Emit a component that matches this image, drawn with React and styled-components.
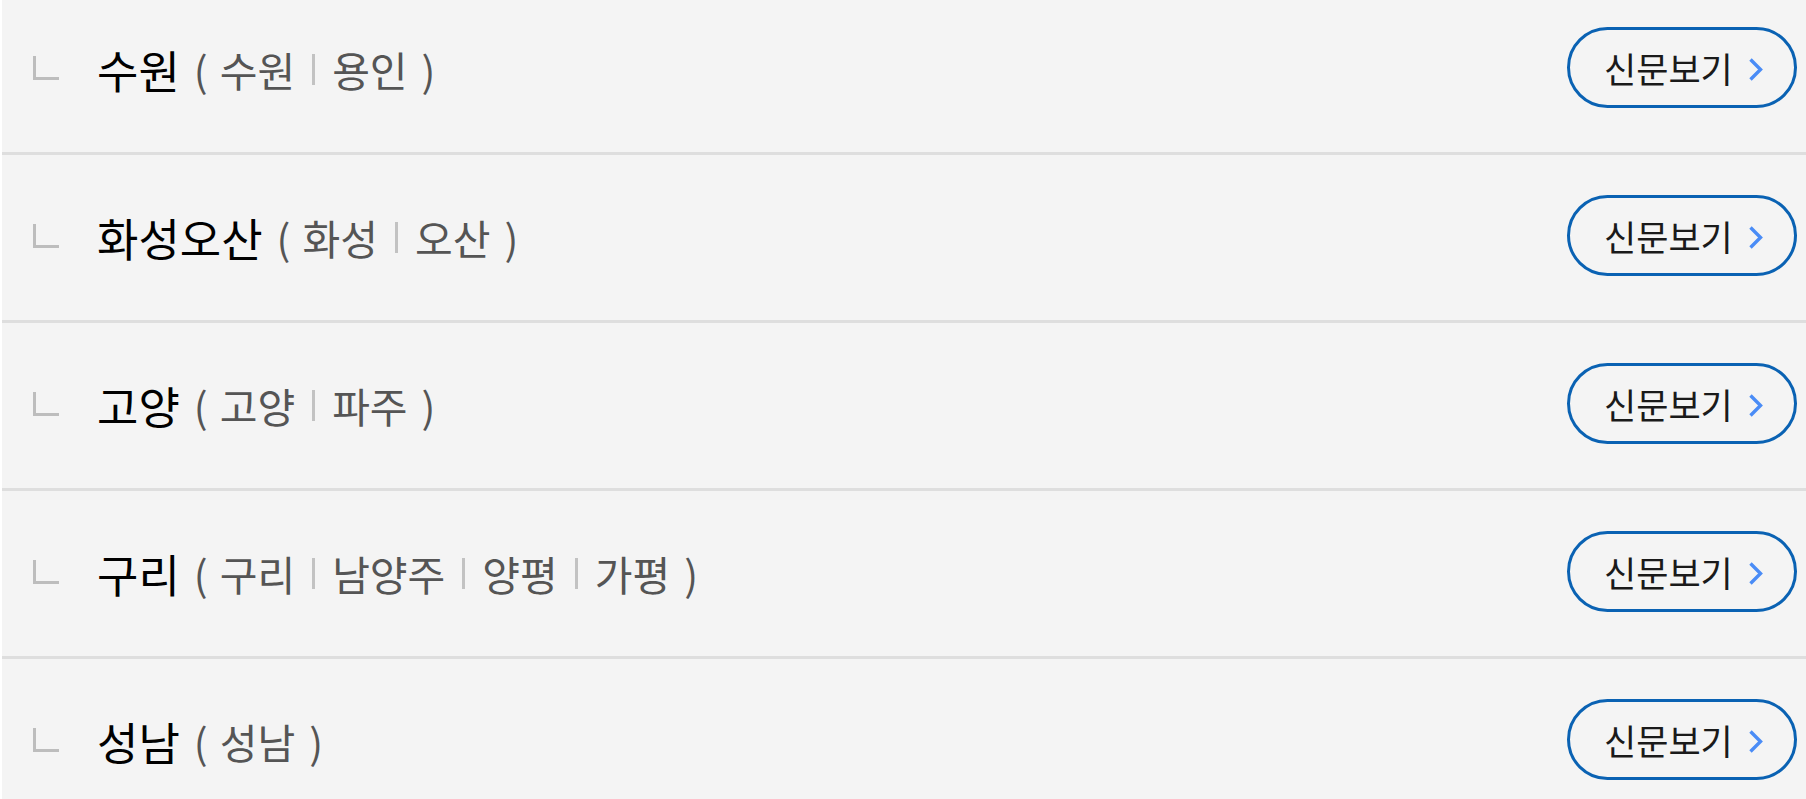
import React from "react";
import styled, { createGlobalStyle } from "styled-components";

const GlobalStyle = createGlobalStyle`
  html, body {
    margin: 0;
    padding: 0;
    background: #ffffff;
    overflow: hidden;
  }
  body {
    font-family: "Noto Sans CJK KR", "Noto Sans", sans-serif;
  }
`;

const regions = [
  { name: "수원", areas: ["수원", "용인"] },
  { name: "화성오산", areas: ["화성", "오산"] },
  { name: "고양", areas: ["고양", "파주"] },
  { name: "구리", areas: ["구리", "남양주", "양평", "가평"] },
  { name: "성남", areas: ["성남"] },
];

const Page = () => (
  <Wrapper>
    <List>
      {regions.map((r) => (
        <Row key={r.name}>
          <Corner />
          <Title>
            <Name>{r.name}</Name>
            <Sub>
              <Paren $side="left">(</Paren>
              {r.areas.map((a, i) => (
                <React.Fragment key={a}>
                  {i > 0 && <Sep />}
                  <span>{a}</span>
                </React.Fragment>
              ))}
              <Paren $side="right">)</Paren>
            </Sub>
          </Title>
          <ViewButton type="button">
            신문보기
            <svg width="15" height="25" viewBox="0 0 15 25">
              <path d="M2.5 2.5 L12.5 12.5 L2.5 22.5" fill="none" stroke="#4a8cf6" strokeWidth="3.4" />
            </svg>
          </ViewButton>
        </Row>
      ))}
    </List>
  </Wrapper>
);

const Wrapper = styled.div`
  padding-left: 2px;
  height: 799px;
  overflow: hidden;
`;

const List = styled.ul`
  list-style: none;
  margin: -13px 0 0;
  padding: 0;
  background: #f4f4f4;
`;

const Row = styled.li`
  display: flex;
  align-items: center;
  height: 165px;
  padding: 0 9px 0 31px;
  border-bottom: 3px solid #dedede;
`;

const Corner = styled.span`
  display: block;
  width: 23px;
  height: 21px;
  border-left: 3px solid #bdbdbd;
  border-bottom: 3px solid #bdbdbd;
  margin-top: -3px;
  flex-shrink: 0;
`;

const Title = styled.div`
  display: flex;
  align-items: center;
  margin-left: 38px;
  flex: 1;
`;

const Name = styled.span`
  font-size: 45px;
  color: #000;
  line-height: 1;
`;

const Sub = styled.span`
  display: flex;
  align-items: center;
  margin-left: 14px;
  font-size: 41px;
  color: #555;
  line-height: 1;
`;

const Paren = styled.span`
  margin: ${(p) => (p.$side === "left" ? "0 12px 0 0" : "0 0 0 14px")};
`;

const Sep = styled.span`
  display: inline-block;
  width: 3px;
  height: 31px;
  background: #c2c2c2;
  margin: 0 17px;
`;

const ViewButton = styled.button`
  display: flex;
  align-items: center;
  gap: 15px;
  width: 230px;
  height: 81px;
  margin-top: -4px;
  padding: 0 0 0 34px;
  border: 3px solid #0a62b3;
  border-radius: 41px;
  background: transparent;
  color: #1a1a1a;
  font-family: "Noto Sans CJK KR", "Noto Sans", sans-serif;
  font-size: 35px;
  line-height: 1;
  cursor: pointer;

  svg {
    flex-shrink: 0;
    margin-top: 3px;
  }
`;

export default function App() {
  return (
    <>
      <GlobalStyle />
      <Page />
    </>
  );
}
